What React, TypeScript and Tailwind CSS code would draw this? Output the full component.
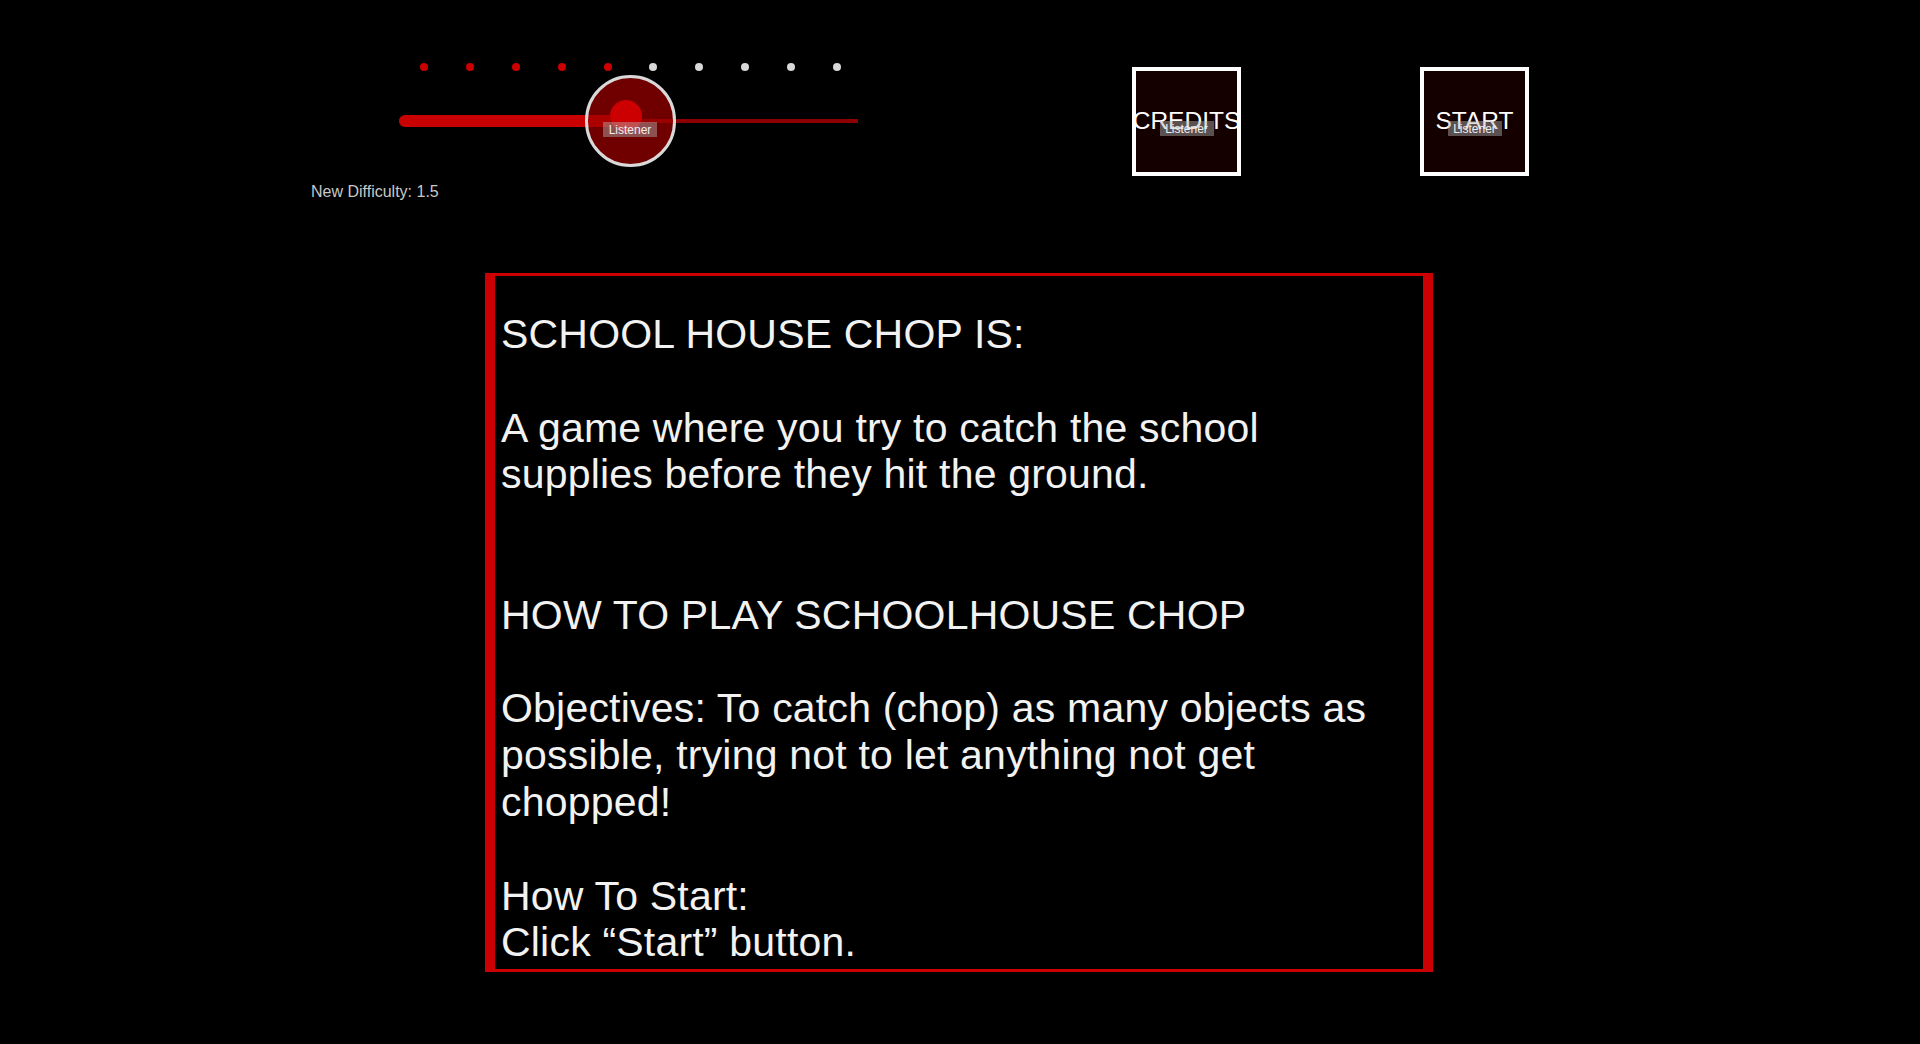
const dots = [0, 1, 2, 3, 4, 5, 6, 7, 8, 9];

function ListenerTag() {
  return (
    <div className="absolute left-1/2 top-[50px] -translate-x-1/2 w-[54px] h-[15px] bg-[#b4b4b4]/45 flex items-center justify-center text-[12px] leading-none text-[#eeeeee]">
      Listener
    </div>
  );
}

function MenuButton({ label }: { label: string }) {
  return (
    <button className="relative w-[109px] h-[109px] border-4 border-white bg-[#150000] flex items-center justify-center">
      <span className="whitespace-nowrap text-[24.5px] leading-none text-white">{label}</span>
      <ListenerTag />
    </button>
  );
}

function DifficultySlider() {
  return (
    <div className="w-[560px]">
      <div className="flex gap-[37.9px] pl-[109px] pt-[63px]">
        {dots.map(i => (
          <span key={i} className={i < 5 ? 'w-2 h-2 rounded-full bg-[#cc0000]' : 'w-2 h-2 rounded-full bg-[#d8d8d8]'} />
        ))}
      </div>
      <div className="relative ml-[88px] mt-1 w-[459px] h-[92px]">
        <div className="absolute left-0 right-0 top-[44px] h-1 bg-[#8e0000]" />
        <div className="absolute left-0 top-[40px] w-[211px] h-3 rounded-l-full bg-[#c80000]" />
        <div className="absolute left-[186px] top-0 w-[91px] h-[92px] rounded-full border-[3px] border-[#d9d9d9] bg-[#a00000]/70">
          <div className="absolute left-[22px] top-[22px] w-8 h-8 rounded-full bg-[#cc0000]" />
          <div className="absolute left-[15px] top-[44px] w-[54px] h-[15px] bg-[#b4b4b4]/45 flex items-center justify-center text-[12px] leading-none text-[#eeeeee]">
            Listener
          </div>
        </div>
      </div>
      <p className="mt-4 text-[16px] leading-[18px] text-[#c8c8c8]">New Difficulty: 1.5</p>
    </div>
  );
}

export default function App() {
  return (
    <div className="min-h-screen bg-black font-['Liberation_Sans',Arial,sans-serif]">
      <div className="flex items-start h-[273px] pl-[311px]">
        <DifficultySlider />
        <div className="flex mt-[67px] ml-[261px] gap-[179px]">
          <MenuButton label="CREDITS" />
          <MenuButton label="START" />
        </div>
      </div>

      <div className="ml-[485px] w-[948px] h-[699px] border-x-[10px] border-y-[3px] border-[#cc0000] pl-[6px] pt-[35px]">
        <p className="w-[890px] text-[41px] tracking-[0.2px] leading-[46.8px] text-[#f2f2f2]">
          SCHOOL HOUSE CHOP IS:
          <br />
          <br />
          A game where you try to catch the school supplies before they hit the ground.
          <br />
          <br />
          <br />
          HOW TO PLAY SCHOOLHOUSE CHOP
          <br />
          <br />
          Objectives: To catch (chop) as many objects as possible, trying not to let anything not get chopped!
          <br />
          <br />
          How To Start:
          <br />
          Click “Start” button.
        </p>
      </div>
    </div>
  );
}
